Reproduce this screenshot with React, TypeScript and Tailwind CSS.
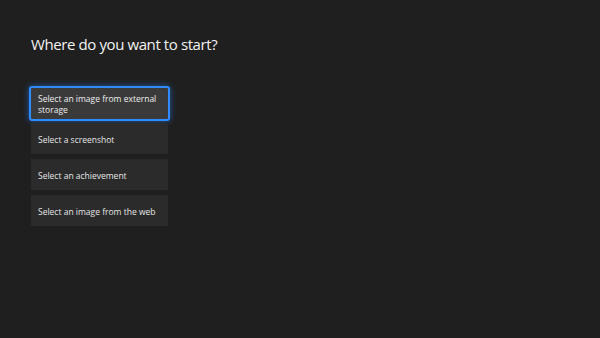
export default function App() {
  const items = [
    "Select a screenshot",
    "Select an achievement",
    "Select an image from the web",
  ];

  return (
    <div
      className="h-[338px] w-[600px] bg-[#1f1f1f] pl-[31px] pt-[32px] text-white"
      style={{ fontFamily: '"Open Sans", "Noto Sans", sans-serif' }}
    >
      <h1 className="text-[15px] font-medium leading-[24px] tracking-[-0.4px] text-[#f2f2f2]">
        Where do you want to start?
      </h1>
      <div className="mt-[30px] flex w-[137px] flex-col gap-[5px]">
        <div className="-mx-[2px] -mb-[3px] flex h-[35px] items-center rounded-[3px] border-2 border-[#2f8cff] bg-[#3a3a3a] px-[7px] shadow-[0_0_6px_rgba(40,130,255,0.6)]">
          <span className="text-[8.5px] leading-[11px] text-[#eeeeee]">
            Select an image from external storage
          </span>
        </div>
        {items.map((t) => (
          <div
            key={t}
            className="flex h-[31px] items-center bg-[#2b2b2b] px-[7px] pt-[1px]"
          >
            <span className="text-[8.5px] leading-[11px] text-[#e6e6e6]">{t}</span>
          </div>
        ))}
      </div>
    </div>
  );
}
